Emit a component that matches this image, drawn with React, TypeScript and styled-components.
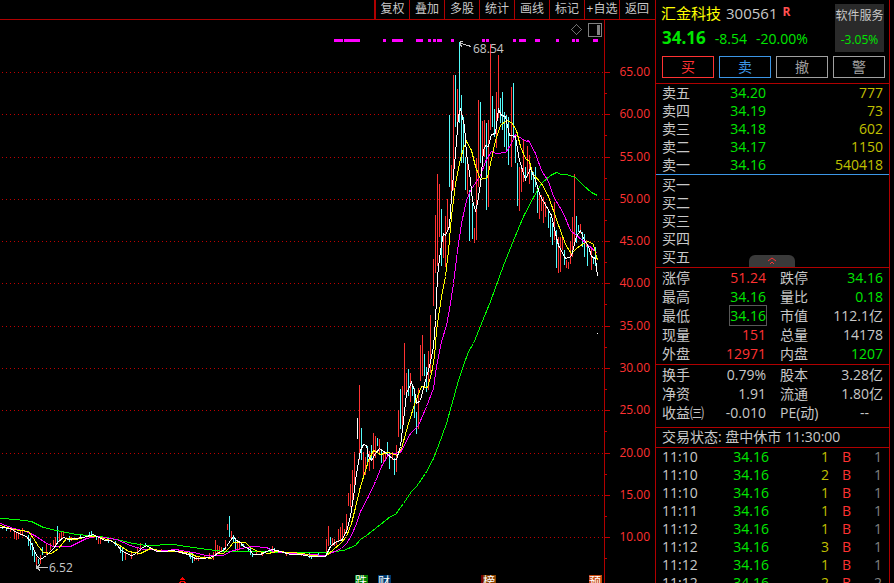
import React from 'react';
import styled, { createGlobalStyle } from 'styled-components';

const color = {
  red: '#ff3232',
  line: '#b00000',
  green: '#00e600',
  yellow: '#c0c000',
  text: '#c8c8c8',
  dim: '#808080',
  blue: '#3c96e6',
};

const GlobalStyle = createGlobalStyle`
  * { box-sizing: border-box; }
  body {
    margin: 0;
    background: #000;
    color: ${color.text};
    font: 14px/18px 'Open Sans', 'Noto Sans CJK SC', sans-serif;
  }
  button { font: inherit; cursor: pointer; }
`;

const Page = styled.div`
  display: flex;
  height: 100vh;
  overflow: hidden;
  padding-right: 4px;
`;

const ChartPane = styled.main`
  flex: 1;
  min-width: 0;
  display: flex;
  flex-direction: column;
`;

const Toolbar = styled.nav`
  display: flex;
  justify-content: flex-end;
  height: 20px;
  flex: none;
  padding-right: 1px;
  border-bottom: 1px solid ${color.line};
`;

const ToolButton = styled.button`
  width: 35px;
  padding: 0 0 2px;
  border: 0;
  border-left: 1px solid ${color.line};
  background: none;
  color: ${color.text};
  font-size: 12px;
  line-height: 17px;
  white-space: nowrap;
  overflow: hidden;
  &:first-child { border-left-width: 2px; }
`;

const ChartSvg = styled.svg`
  display: block;
  width: 100%;
  flex: 1;
  min-height: 0;
  font-size: 12px;
`;

const Sidebar = styled.aside`
  width: 235px;
  flex: none;
  border: solid ${color.line};
  border-width: 0 1px;
`;

const Header = styled.header`
  display: flex;
  justify-content: space-between;
  padding: 4px 5px 0;
`;

const TitleRow = styled.div`
  display: flex;
  gap: 5px;
  font-size: 15px;
  line-height: 19px;
`;

const StockName = styled.span`
  color: #ffff00;
`;

const MarginFlag = styled.sup`
  color: #ff5050;
  font-size: 12px;
  font-weight: 700;
  line-height: 16px;
`;

const PriceRow = styled.div`
  display: flex;
  align-items: baseline;
  gap: 9px;
  margin-top: 2px;
  padding-left: 1px;
  color: ${color.green};
  line-height: 26px;
`;

const LastPrice = styled.strong`
  font-size: 17px;
`;

const Sector = styled.div`
  width: 49px;
  height: 48px;
  background: #2a2a2a;
  font-size: 12px;
  line-height: 24px;
  text-align: center;
  white-space: nowrap;
`;

const SectorChange = styled.div`
  color: ${color.green};
`;

const Actions = styled.div`
  display: grid;
  grid-template-columns: repeat(4, 1fr);
  gap: 5px;
  padding: 5px 4px 5px 6px;
  margin-top: -1px;
  border-bottom: 1px solid ${color.line};
`;

const ActionButton = styled.button<{ $tone: string }>`
  height: 22px;
  padding: 0;
  border: 1px solid ${(p) => p.$tone};
  background: none;
  color: ${(p) => p.$tone};
  line-height: 20px;
`;

const Table = styled.table`
  width: 100%;
  table-layout: fixed;
  border-collapse: collapse;
`;

const Col = styled.col<{ $w?: number }>`
  width: ${(p) => (p.$w ? `${p.$w}px` : 'auto')};
`;

const Cell = styled.td<{ $tone?: string; $tall?: boolean }>`
  height: ${(p) => (p.$tall ? 19 : 18)}px;
  padding: 0;
  text-align: right;
  white-space: nowrap;
  color: ${(p) => p.$tone ?? color.text};
`;

const Label = styled.th<{ $indent?: number }>`
  padding: 0 0 0 ${(p) => p.$indent ?? 6}px;
  text-align: left;
  font-weight: 400;
  white-space: nowrap;
`;

const Block = styled.section<{ $edge?: string; $bottom?: number; $top?: number }>`
  position: relative;
  padding: ${(p) => p.$top ?? 0}px 6px ${(p) => p.$bottom ?? 0}px 0;
  border-bottom: 1px solid ${(p) => p.$edge ?? color.line};
`;

const Boxed = styled.span`
  outline: 1px solid #585858;
`;

const FoldButton = styled.button`
  position: absolute;
  left: 93px;
  bottom: 0;
  width: 46px;
  height: 12px;
  padding: 0;
  border: 0;
  border-radius: 6px 6px 0 0;
  background: #3a3a3a;
  display: flex;
  align-items: center;
  justify-content: center;
`;

const Status = styled.p`
  margin: 0;
  padding: 0 6px;
  height: 20px;
  line-height: 18px;
  white-space: nowrap;
  border-bottom: 1px solid ${color.line};
`;

/* ---------- chart data ---------- */

type Pane = { x: number; y: number; data: string };

// Each pane holds points on a grid of three steps per unit, relative to its origin.
const toPoints = (panes: Pane[]) =>
  panes
    .flatMap((p) =>
      p.data.split(' ').map((pair) => {
        const [x, y] = pair.split(',').map(Number);
        return `${Math.floor(p.x + x / 3) + 0.5},${Math.floor(p.y + y / 3) + 0.5}`;
      }),
    )
    .join(' ');

const averages = [
  {
    stroke: '#00ff00',
    panes: [
      { x: 0, y: 500, data: '0,55 50,58 95,65 130,83 170,92 230,102 300,110 350,118 400,130 440,136 520,133 560,138' },
      { x: 180, y: 500, data: '60,145 105,152 130,155 435,156' },
      { x: 310, y: 260, data: '45,877 100,870 135,855 150,838 170,825 210,793 240,768 255,763 280,730 305,695 320,678 345,640 370,595 385,555 410,490 430,415 445,360 460,315 475,275 490,250 515,190 540,125' },
      { x: 400, y: 30, data: '283,780 310,705 340,630 370,560 400,503 425,460 450,435 468,427 485,433 500,433 525,443 550,467 575,488 592,497' },
    ],
  },
  {
    stroke: '#ff00ff',
    panes: [
      { x: 0, y: 500, data: '0,70 40,85 80,95 110,110 140,130 160,138 210,139 230,130 260,115 290,108 350,118 390,135 430,148 500,152 530,148' },
      { x: 180, y: 500, data: '0,152 40,158 80,165 130,167 150,155 180,145 220,140 260,143 280,155 330,160' },
      { x: 310, y: 260, data: '0,882 45,885 95,865 110,850 125,825 140,790 150,755 175,710 195,665 215,620 235,583 270,577 300,520 325,495 350,440 370,385 380,320 395,245 410,195 420,130 430,70' },
      { x: 400, y: 30, data: '172,660 185,580 200,510 210,480 240,435 255,395 275,365 290,369 315,367 330,345 345,312 365,325 380,335 385,330 405,370 425,420 445,455 460,500 490,550 512,600 530,615 560,640 592,670' },
    ],
  },
  {
    stroke: '#ffff00',
    panes: [
      { x: 0, y: 500, data: '0,76 40,88 85,95 100,115 115,140 130,158 155,160 175,145 200,115 230,118 260,110 290,108 330,120 365,140 385,155 420,160 450,145 490,153 530,153' },
      { x: 180, y: 500, data: '0,155 30,160 50,170 95,174 110,160 130,160 145,145 160,127 195,127 215,145 235,155 265,160 290,155 330,158 370,160' },
      { x: 310, y: 260, data: '0,885 45,888 70,868 90,850 110,828 125,790 140,730 150,680 165,630 175,600 190,570 210,583 235,577 262,587 275,565 295,490 315,425 335,380 352,383 365,340 372,290 380,210 395,110 405,50' },
      { x: 400, y: 30, data: '145,660 155,560 165,460 180,385 190,355 200,335 215,360 225,410 240,447 262,443 272,400 285,330 300,285 320,270 335,278 350,300 360,350 375,385 387,395 397,430 425,460 445,500 465,560 485,610 500,650 515,670 530,655 550,640 565,634 580,642 593,690' },
    ],
  },
  {
    stroke: '#ffffff',
    panes: [
      { x: 0, y: 500, data: '0,82 30,86 50,98 65,104 80,108 90,125 100,145 110,165 122,177 140,165 160,145 175,125 190,113 205,118 225,116 250,112 280,102 295,112 315,120 330,122 350,132 365,150 380,160 395,165 410,160 425,145 440,137 455,145 470,153 490,155 520,152' },
      { x: 180, y: 500, data: '0,158 25,163 45,175 70,175 100,170 115,158 130,150 140,140 150,120 160,108 170,122 180,128 190,140 205,145 220,162 240,162 260,155 278,147 300,155 330,162 360,163' },
      { x: 310, y: 260, data: '0,888 45,888 60,860 80,845 95,840 110,815 120,770 130,710 140,640 150,570 160,553 168,555 175,590 185,600 195,580 208,565 230,580 250,597 260,598 270,560 280,480 290,400 303,367 312,390 320,430 330,420 345,360 358,320 370,260 375,180 382,50' },
      { x: 400, y: 30, data: '120,660 130,610 137,617 148,590 155,500 165,370 175,260 182,235 192,290 200,370 210,450 218,510 225,540 232,520 240,460 250,360 256,345 264,350 275,312 285,310 295,237 305,255 315,260 328,315 345,320 358,390 375,447 390,415 405,450 420,500 440,530 455,555 465,610 475,645 495,685 515,680 530,620 540,600 552,630 565,650 575,680 585,685 593,738' },
    ],
  },
];

// Price bars: direction (r up, c down, w flat), x, high, low.
const bars: Pane[] = [
  {
    x: 0, y: 500,
    data: 'c8,78,88 c20,80,92 r32,82,98 r44,90,117 r50,98,120 r56,95,117 r62,90,105 r68,85,110 c85,105,138 c91,115,150 c97,130,170 c103,150,185 r109,170,203 c115,178,192 r121,165,192 c127,140,165 r139,130,165 r151,130,150 r160,120,140 r166,112,140 c173,77,130 r179,100,128 r185,95,120 r190,97,110 c208,108,125 r215,112,125 c240,103,115 c268,95,108 c274,92,105 c289,108,120 r295,112,132 r301,115,132 c325,115,130 c345,122,138 c361,135,160 c367,145,183 r376,155,180 r394,160,177 r412,140,165 r420,130,155 c435,128,140 c468,148,158 r485,148,158 r535,148,160 c567,155,170 c577,165,188 r583,170,183 r590,172,182',
  },
  {
    x: 180, y: 500,
    data: 'c31,160,178 c37,160,188 r55,168,182 r73,165,178 r88,160,178 r100,155,178 r106,120,165 r112,135,160 r118,138,155 r124,140,155 c130,145,155 r136,120,150 r142,72,90 c148,48,112 r155,92,120 c160,105,125 c166,118,155 r172,128,155 r178,125,150 c184,130,140 c190,132,142 c205,140,155 c211,145,165 c217,158,170 r230,150,165 r247,158,167 c268,145,158 r278,138,148 c284,145,158 r320,158,166 r365,160,168 c388,160,175 c395,165,177 r412,163,170 c415,155,163',
  },
  {
    x: 310, y: 260,
    data: 'r49,837,880 r55,797,858 c61,830,855 r67,835,858 r73,838,860 r79,843,855 r85,807,845 r91,800,840 r97,790,835 r103,807,825 r109,762,820 r115,700,740 r121,672,740 r127,630,740 r133,575,680 w142,473,535 r148,375,600 c154,503,600 r160,575,652 r166,590,645 c172,558,618 r178,573,632 c184,555,600 r190,518,627 r196,528,595 c202,535,560 r208,537,583 c214,567,610 r220,575,608 r226,575,602 c232,545,580 c238,575,627 r247,575,600 c253,595,645 r259,555,635 r265,450,530 c271,387,507 r277,378,500 r283,249,405 r289,338,405 c295,327,408 r301,338,425 c307,372,408 c313,385,475 c319,455,520 r325,383,505 r331,255,362 r337,225,348 c343,282,348 c349,320,395 r355,273,390 r361,165,340 r371,0,137 r377,0,40',
  },
  {
    x: 400, y: 30,
    data: 'r101,687,800 r107,555,730 r113,432,708 r119,462,620 c125,537,708 r131,612,683 r137,558,712 r143,507,600 c149,255,470 r155,405,510 r161,135,480 c167,135,290 r173,178,280 c179,36,278 c185,195,400 c191,262,400 c197,380,480 r203,392,490 c209,480,632 c218,518,625 r224,595,640 r230,383,630 r236,210,470 c242,216,400 r248,273,395 r254,270,380 c260,278,540 r266,270,530 r272,42,300 c278,198,290 c284,237,320 r290,186,353 r296,75,265 c302,205,280 c308,186,300 c314,245,350 c320,255,362 c326,260,405 r335,170,410 c341,158,326 c347,325,400 c353,398,528 r359,410,542 r365,404,486 r371,330,455 c377,410,450 r383,348,440 r389,375,462 c395,410,450 c401,425,488 c407,410,470 c413,465,548 r419,485,565 r425,495,542 r431,500,578 r437,515,560 c446,540,593 c452,560,620 c458,580,645 r464,515,630 c470,600,715 r476,620,728 r482,622,728 r488,625,660 c494,660,706 r500,690,715 r506,695,715 r512,632,700 r518,560,680 r524,432,640 c530,558,640 c536,585,605 r542,582,610 c548,605,650 c554,612,682 r560,630,650 c563,645,708 r575,650,718 c581,680,700 c587,650,706',
  },
];

const barColor: Record<string, string> = { r: color.red, c: '#54fcfc', w: '#ffffff' };

const gridLines = [65, 60, 55, 50, 45, 40, 35, 30, 25, 20, 15, 10].map((value) => ({
  label: value.toFixed(2),
  y: Math.round(72 + (65 - value) * 8.458),
}));

const eventMarks = [
  [334, 9], [344, 16], [383, 3], [392, 11], [416, 7], [428, 3], [433, 3], [437, 5], [451, 3],
  [482, 3], [486, 3], [513, 3], [519, 7], [535, 5], [556, 3], [572, 3], [576, 3], [593, 5],
];

const newsTags = [
  { x: 355, text: '跌', fill: '#008000' },
  { x: 378, text: '财', fill: '#003a70' },
  { x: 483, text: '榜', fill: '#8a4200' },
  { x: 589, text: '预', fill: '#c84810' },
];

function PriceChart() {
  return (
    <ChartSvg viewBox="0 20 655 563" preserveAspectRatio="xMaxYMin meet" role="img" aria-label="汇金科技 K线图">
      <g shapeRendering="crispEdges">
        {gridLines.map((g) => (
          <g key={g.label} stroke="#c00000">
            <line x1="2" x2="603" y1={g.y + 0.5} y2={g.y + 0.5} strokeDasharray="1 3" />
            <line x1="605" x2="610" y1={g.y + 0.5} y2={g.y + 0.5} />
            <line x1="605" x2="607" y1={g.y + 21.5} y2={g.y + 21.5} />
          </g>
        ))}
        <line x1="604.5" x2="604.5" y1="20" y2="583" stroke={color.line} />
        {eventMarks.map(([x, w]) => (
          <rect key={x} x={x} y="39" width={w} height="3" fill="#ff00ff" />
        ))}
        {bars.flatMap((pane) =>
          pane.data.split(' ').map((item) => {
            const [x, high, low] = item.slice(1).split(',').map(Number);
            return (
              <rect
                key={`${pane.x}-${x}`}
                x={Math.floor(pane.x + x / 3)}
                y={Math.round(pane.y + high / 3)}
                width="1"
                height={Math.round((low - high) / 3)}
                fill={barColor[item[0]]}
              />
            );
          }),
        )}
        {averages.map((a) => (
          <polyline key={a.stroke} points={toPoints(a.panes)} fill="none" stroke={a.stroke} />
        ))}
        <rect x="597" y="333" width="1" height="1" fill="#fff" />
        <path d="M471 46.5 L460 43 M463 41.5 h-3 v3 l2 2" fill="none" stroke={color.text} />
        <path d="M48 567.5 H37 M40 564.5 L37 567.5 L40 570.5 M36.5 565 v4" fill="none" stroke={color.text} />
        <path d="M576.5 24.5 L581.5 29.5 L576.5 34.5 L571.5 29.5 Z" fill="none" stroke="#707070" />
        <rect x="588.5" y="23.5" width="13" height="13" fill="none" stroke="#808080" />
        <rect x="597" y="25" width="3" height="10" fill="#808080" />
        <path d="M182 577 l3 3 h-6 Z M180 581 h5 v1 h1 v1 h-2 v-1 h-3 v1 h-2 v-1 h1 Z" fill="#ff0000" />
        <rect x="481" y="575" width="4" height="8" fill="#780000" />
        {newsTags.map((tag) => (
          <rect key={tag.text} x={tag.x} y="575" width="13" height="8" fill={tag.fill} />
        ))}
      </g>
      {newsTags.map((tag) => (
        <text key={tag.text} x={tag.x} y="586" fill="#fff">{tag.text}</text>
      ))}
      <text x="473" y="53" fill={color.text}>68.54</text>
      <text x="49" y="572" fill={color.text}>6.52</text>
      {gridLines.map((g) => (
        <text key={g.label} x="650" y={g.y + 4} textAnchor="end" fill={color.red}>{g.label}</text>
      ))}
    </ChartSvg>
  );
}

/* ---------- quote data ---------- */

const tools = ['复权', '叠加', '多股', '统计', '画线', '标记', '+自选', '返回'];

const actions = [
  { label: '买', tone: color.red },
  { label: '卖', tone: color.blue },
  { label: '撤', tone: '#a0a0a0' },
  { label: '警', tone: '#a0a0a0' },
];

const asks = [
  ['卖五', '34.20', '777'],
  ['卖四', '34.19', '73'],
  ['卖三', '34.18', '602'],
  ['卖二', '34.17', '1150'],
  ['卖一', '34.16', '540418'],
];

const bids = ['买一', '买二', '买三', '买四', '买五'];

type Fact = { label: string; value: string; tone?: string; boxed?: boolean };

const marketFacts: Fact[][] = [
  [{ label: '涨停', value: '51.24', tone: color.red }, { label: '跌停', value: '34.16', tone: color.green }],
  [{ label: '最高', value: '34.16', tone: color.green }, { label: '量比', value: '0.18', tone: color.green }],
  [{ label: '最低', value: '34.16', tone: color.green, boxed: true }, { label: '市值', value: '112.1亿' }],
  [{ label: '现量', value: '151', tone: color.red }, { label: '总量', value: '14178' }],
  [{ label: '外盘', value: '12971', tone: color.red }, { label: '内盘', value: '1207', tone: color.green }],
];

const companyFacts: Fact[][] = [
  [{ label: '换手', value: '0.79%' }, { label: '股本', value: '3.28亿' }],
  [{ label: '净资', value: '1.91' }, { label: '流通', value: '1.80亿' }],
  [{ label: '收益㈢', value: '-0.010' }, { label: 'PE(动)', value: '--\u2003' }],
];

const trades = [
  ['11:10', '1', '1'], ['11:10', '2', '1'], ['11:10', '1', '1'], ['11:11', '1', '1'],
  ['11:12', '1', '1'], ['11:12', '3', '1'], ['11:12', '1', '1'], ['11:12', '2', '2'],
];

function FactTable({ rows }: { rows: Fact[][] }) {
  return (
    <Table>
      <colgroup><Col $w={54} /><Col $w={56} /><Col $w={60} /><Col /></colgroup>
      <tbody>
        {rows.map((row) => (
          <tr key={row[0].label}>
            {row.map((fact, i) => (
              <React.Fragment key={fact.label}>
                <Label scope="row" $indent={i ? 14 : 6}>{fact.label}</Label>
                <Cell $tall $tone={fact.tone}>{fact.boxed ? <Boxed>{fact.value}</Boxed> : fact.value}</Cell>
              </React.Fragment>
            ))}
          </tr>
        ))}
      </tbody>
    </Table>
  );
}

export default function App() {
  return (
    <Page>
      <GlobalStyle />
      <ChartPane>
        <Toolbar>
          {tools.map((tool) => <ToolButton key={tool}>{tool}</ToolButton>)}
        </Toolbar>
        <PriceChart />
      </ChartPane>
      <Sidebar>
        <Header>
          <div>
            <TitleRow>
              <StockName>汇金科技</StockName>
              <span>300561</span>
              <MarginFlag>R</MarginFlag>
            </TitleRow>
            <PriceRow>
              <LastPrice>34.16</LastPrice>
              <span>-8.54</span>
              <span>-20.00%</span>
            </PriceRow>
          </div>
          <Sector>
            软件服务
            <SectorChange>-3.05%</SectorChange>
          </Sector>
        </Header>
        <Actions>
          {actions.map((a) => <ActionButton key={a.label} $tone={a.tone}>{a.label}</ActionButton>)}
        </Actions>
        <Block $edge={color.blue}>
          <Table>
            <colgroup><Col $w={54} /><Col $w={56} /><Col /></colgroup>
            <tbody>
              {asks.map(([label, price, volume]) => (
                <tr key={label}>
                  <Label scope="row">{label}</Label>
                  <Cell $tone={color.green}>{price}</Cell>
                  <Cell $tone={color.yellow}>{volume}</Cell>
                </tr>
              ))}
            </tbody>
          </Table>
        </Block>
        <Block $top={1} $bottom={1}>
          <Table>
            <colgroup><Col $w={54} /><Col $w={56} /><Col /></colgroup>
            <tbody>
              {bids.map((label) => (
                <tr key={label}><Label scope="row">{label}</Label><Cell /><Cell /></tr>
              ))}
            </tbody>
          </Table>
          <FoldButton aria-label="收起">
            <svg width="10" height="8" viewBox="0 0 10 8" fill="none" stroke="#ff3232">
              <path d="M1 4 L5 1 L9 4 M3 7 L5 5 L7 7" />
            </svg>
          </FoldButton>
        </Block>
        <Block $bottom={1}><FactTable rows={marketFacts} /></Block>
        <Block $bottom={5}><FactTable rows={companyFacts} /></Block>
        <Status>交易状态: 盘中休市 11:30:00</Status>
        <Table>
          <colgroup><Col $w={54} /><Col $w={59} /><Col $w={60} /><Col $w={22} /><Col $w={31} /><Col /></colgroup>
          <tbody>
            {trades.map(([time, volume, count], i) => (
              <tr key={i}>
                <Label scope="row">{time}</Label>
                <Cell $tone={color.green}>34.16</Cell>
                <Cell $tone={color.yellow}>{volume}</Cell>
                <Cell $tone={color.red}>B</Cell>
                <Cell $tone={color.dim}>{count}</Cell>
                <Cell />
              </tr>
            ))}
          </tbody>
        </Table>
      </Sidebar>
    </Page>
  );
}
